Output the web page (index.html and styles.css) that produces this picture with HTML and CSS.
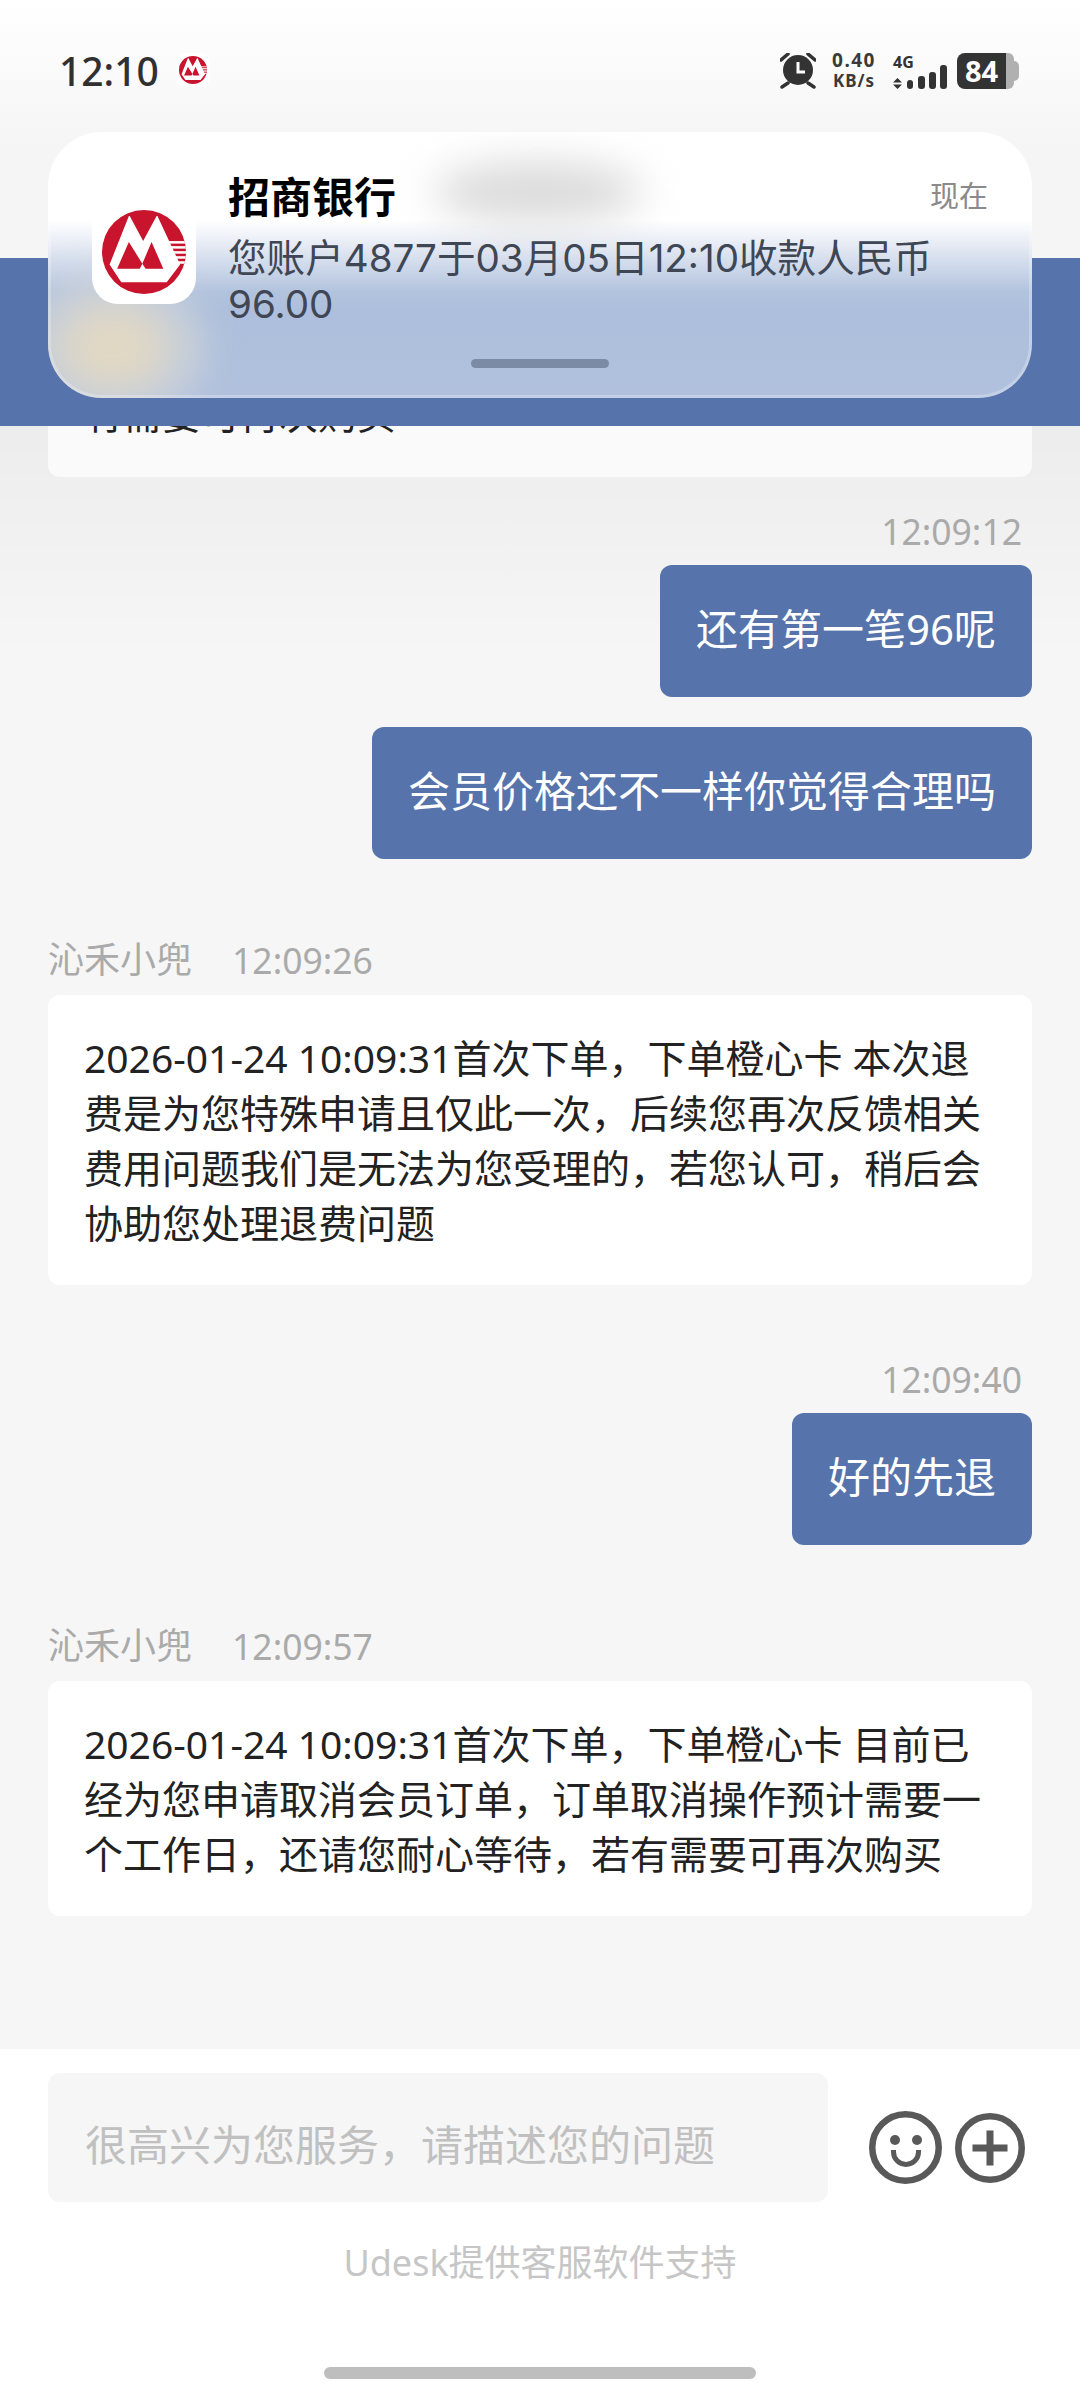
FILE: index.html
```html
<!DOCTYPE html>
<html>
<head>
    <meta charset="UTF-8">
    <title>在线客服</title>
    <link rel="stylesheet" href="styles.css">
</head>
<body>
<div class="phone">
    <header class="top">
        <div class="status">
            <div class="status-left">
                <span class="clock">12:10</span>
                <span class="mini-logo">
                    <svg width="28" height="28" viewBox="0 0 100 100"><use href="#cmb"/></svg>
                </span>
            </div>
            <div class="status-right">
                <svg class="alarm" width="36" height="36" viewBox="0 0 36 36">
                    <circle cx="18" cy="17" r="15" fill="#333"/>
                    <path d="M18 9v10h7" fill="none" stroke="#fff" stroke-width="3"/>
                    <path d="M1 7l7-6M35 7l-7-6M2 34l6-4M34 34l-6-4" fill="none" stroke="#333" stroke-width="3.500" stroke-linecap="round"/>
                </svg>
                <div class="speed"><span>0.40</span><span class="unit">KB/s</span></div>
                <div class="signal">
                    <span class="net">4G</span>
                    <svg width="54" height="24" viewBox="0 0 54 24">
                        <path d="M4.500 13l4.500 4.500h-9zM4.500 24l4.500-4.500h-9z" fill="#333"/>
                        <rect x="14" y="15" width="6" height="9" rx="3" fill="#333"/>
                        <rect x="25" y="11" width="7" height="13" rx="3" fill="#333"/>
                        <rect x="36" y="7" width="7" height="17" rx="3" fill="#333"/>
                        <rect x="47" y="0" width="7" height="24" rx="3" fill="#333"/>
                    </svg>
                </div>
                <div class="battery"><span class="level">84</span><span class="rest"></span></div>
            </div>
        </div>
        <div class="blue-bar"></div>
    </header>

    <section class="notice">
        <span class="blob blob-grey"></span>
        <span class="blob blob-orange"></span>
        <div class="notice-body">
            <div class="app-icon">
                <svg width="84" height="84" viewBox="0 0 100 100"><use href="#cmb"/></svg>
            </div>
            <div class="notice-text">
                <div class="notice-head">
                    <span class="notice-title">招商银行</span>
                    <span class="notice-time">现在</span>
                </div>
                <p class="notice-msg">您账户4877于03月05日12:10收款人民币<br>96.00</p>
            </div>
        </div>
        <span class="grip"></span>
    </section>

    <main class="chat">
        <div class="msg-card cut-card">
            <div class="cut-text">有需要可再次购买</div>
        </div>

        <div class="time-right first">12:09:12</div>
        <div class="bubble">还有第一笔96呢</div>
        <div class="bubble second">会员价格还不一样你觉得合理吗</div>

        <div class="agent"><span class="agent-name">沁禾小兜</span><span>12:09:26</span></div>
        <div class="msg-card">2026-01-24 10:09:31首次下单，下单橙心卡 本次退费是为您特殊申请且仅此一次，后续您再次反馈相关费用问题我们是无法为您受理的，若您认可，稍后会协助您处理退费问题</div>

        <div class="time-right">12:09:40</div>
        <div class="bubble">好的先退</div>

        <div class="agent"><span class="agent-name">沁禾小兜</span><span>12:09:57</span></div>
        <div class="msg-card">2026-01-24 10:09:31首次下单，下单橙心卡 目前已经为您申请取消会员订单，订单取消操作预计需要一个工作日，还请您耐心等待，若有需要可再次购买</div>
    </main>

    <footer class="footer">
        <div class="input-row">
            <div class="input-box">很高兴为您服务，请描述您的问题</div>
            <svg class="tool smile" width="73" height="73" viewBox="0 0 73 73">
                <circle cx="36.500" cy="36.500" r="33.250" fill="none" stroke="#595959" stroke-width="6.500"/>
                <circle cx="26" cy="29" r="5" fill="#595959"/>
                <circle cx="48" cy="29" r="5" fill="#595959"/>
                <path d="M24.500 39v2a12.500 12.500 0 0 0 25 0v-2" fill="none" stroke="#595959" stroke-width="5"/>
            </svg>
            <svg class="tool plus" width="70" height="70" viewBox="0 0 70 70">
                <circle cx="35" cy="35" r="31.750" fill="none" stroke="#595959" stroke-width="6.500"/>
                <path d="M35 17.500v35M17.500 35h35" fill="none" stroke="#595959" stroke-width="7"/>
            </svg>
        </div>
        <div class="support">Udesk提供客服软件支持</div>
        <div class="home-bar"></div>
    </footer>
</div>

<!-- 招行图标 -->
<svg width="0" height="0" class="defs">
    <defs>
        <clipPath id="cmb-clip"><circle cx="50" cy="50" r="50"/></clipPath>
        <symbol id="cmb" viewBox="0 0 100 100">
            <circle cx="50" cy="50" r="50" fill="#c8152d"/>
            <path d="M33 7h-1L9 65l14 21h54l16-21L66 7h-1L49 37z" fill="#fff"/>
            <path d="M32 38L18 70h27l3-6zM59 38L48 64l4 6h21z" fill="#c8152d"/>
            <g clip-path="url(#cmb-clip)" fill="#fff">
                <rect x="78" y="37" width="24" height="3"/>
                <rect x="78" y="43" width="24" height="3"/>
                <rect x="78" y="49" width="24" height="3"/>
                <rect x="78" y="55" width="24" height="3"/>
                <rect x="78" y="61" width="24" height="3"/>
            </g>
        </symbol>
    </defs>
</svg>
</body>
</html>
```

FILE: styles.css
```css
* {
    box-sizing: border-box;
}

html,
body {
    margin: 0;
    padding: 0;
}

body {
    font-family: "Noto Sans", "Noto Sans CJK SC", sans-serif;
    background-color: #f6f6f6;
}

.phone {
    position: relative;
    width: 1080px;
    height: 2400px;
    overflow: hidden;
    display: flex;
    flex-direction: column;
    background-color: #f6f6f6;
}

.defs {
    position: absolute;
}

/* 顶部 */
.top {
    position: relative;
    z-index: 2;
    height: 426px;
    flex: none;
    display: flex;
    flex-direction: column;
    background: linear-gradient(#ffffff, #f5f5f5 150px);
}

.status {
    height: 258px;
    padding: 46px 60px 0 59px;
    display: flex;
    justify-content: space-between;
    align-items: flex-start;
}

.status-left {
    display: flex;
    align-items: center;
    gap: 17px;
    height: 48px;
}

.clock {
    font-size: 39px;
    font-weight: 500;
    color: #303030;
}

.mini-logo {
    width: 34px;
    height: 34px;
    display: flex;
    align-items: center;
    justify-content: center;
    background-color: #fff;
    border-radius: 8px;
}

.status-right {
    display: flex;
    align-items: center;
    height: 50px;
}

.alarm {
    margin-right: 15px;
}

.speed {
    width: 46px;
    margin-right: 16px;
    display: flex;
    flex-direction: column;
    align-items: center;
    font-weight: 700;
    font-size: 19px;
    line-height: 20px;
    letter-spacing: 1.500px;
    white-space: nowrap;
    color: #3a3a3a;
}

.speed .unit {
    font-size: 17px;
    line-height: 22px;
    letter-spacing: 1px;
}

.signal {
    position: relative;
    width: 54px;
    height: 36px;
    margin-right: 10px;
    display: flex;
    align-items: flex-end;
}

.signal .net {
    position: absolute;
    left: 0;
    top: 0;
    font-weight: 700;
    font-size: 16px;
    line-height: 18px;
    color: #333;
}

.battery {
    position: relative;
    display: flex;
    width: 63px;
    height: 36px;
}

.battery .level {
    width: 49px;
    background-color: #333;
    color: #fff;
    font-weight: 700;
    font-size: 29px;
    line-height: 36px;
    text-align: center;
    border-radius: 8px 0 0 8px;
}

.battery .rest {
    position: relative;
    width: 8px;
    background-color: #b0b0b0;
    border-radius: 0 6px 6px 0;
}

.battery .rest::after {
    content: "";
    position: absolute;
    left: 8px;
    top: 8px;
    width: 5px;
    height: 20px;
    background-color: #b0b0b0;
    border-radius: 0 5px 5px 0;
}

.blue-bar {
    height: 168px;
    background-color: #5673ab;
}

/* 通知 */
.notice {
    position: absolute;
    z-index: 3;
    left: 48px;
    top: 132px;
    width: 984px;
    height: 266px;
    overflow: hidden;
    border-radius: 54px;
    background: linear-gradient(#ffffff 0, #ffffff 88px, #e4e9f3 115px, #c8d4e8 140px, #b2c3de 160px, #adbfdc 180px, #b1c1dd 100%);
}

.notice::after {
    content: "";
    position: absolute;
    inset: 0;
    border-radius: 54px;
    box-shadow: inset 0 0 0 3px rgba(255, 255, 255, 0.25);
}

.blob {
    position: absolute;
    border-radius: 50%;
}

.blob-grey {
    left: 385px;
    top: 30px;
    width: 210px;
    height: 60px;
    filter: blur(20px);
    background-color: #dadada;
}

.blob-orange {
    left: -60px;
    top: 115px;
    width: 250px;
    height: 200px;
    filter: blur(12px);
    background: radial-gradient(closest-side, #e5d9c0 0, #dcd6c8 30%, rgba(214, 216, 216, 0.6) 60%, rgba(205, 214, 226, 0) 90%);
}

.notice-body {
    position: relative;
    display: flex;
    padding: 40px 44px 0 44px;
}

.app-icon {
    width: 104px;
    height: 104px;
    margin-top: 28px;
    flex: none;
    display: flex;
    align-items: center;
    justify-content: center;
    background-color: #fff;
    border-radius: 26px;
}

.notice-text {
    margin-left: 32px;
    flex: 1;
}

.notice-head {
    display: flex;
    justify-content: space-between;
    align-items: center;
    height: 44px;
}

.notice-title {
    font-size: 42px;
    font-weight: 700;
    color: #000;
}

.notice-time {
    font-size: 29px;
    color: #8a8a8a;
}

.notice-msg {
    margin: 19px 0 0;
    font-family: Inter, "Noto Sans CJK SC", sans-serif;
    font-size: 38.600px;
    line-height: 46px;
    color: #3f4654;
}

.grip {
    position: absolute;
    left: 423px;
    top: 227px;
    width: 138px;
    height: 9px;
    border-radius: 5px;
    background-color: #7c8ba5;
}

/* 聊天内容 */
.chat {
    position: relative;
    flex: 1;
    padding: 0 48px;
    display: flex;
    flex-direction: column;
    overflow: hidden;
}

/* 通知下方的阴影 */
.chat::before {
    content: "";
    position: absolute;
    left: 0;
    right: 0;
    top: 0;
    height: 230px;
    background: linear-gradient(rgba(0, 0, 0, 0.04), rgba(0, 0, 0, 0));
}

.msg-card {
    position: relative;
    background-color: #fff;
    border-radius: 12px;
    padding: 35px 36px;
    font-size: 39px;
    line-height: 55px;
    color: #222;
}

.cut-card {
    margin-top: -52px;
    height: 103px;
    padding: 12px 36px 0;
    background-color: #fafafa;
}

.time-right {
    margin-top: 67px;
    padding-right: 10px;
    text-align: right;
    font-size: 35.500px;
    line-height: 54px;
    color: #aaa;
}

.time-right.first {
    position: relative;
    margin-top: 27px;
}

.bubble {
    position: relative;
    align-self: flex-end;
    height: 132px;
    margin-top: 7px;
    padding: 0 36px;
    line-height: 128px;
    font-size: 42px;
    color: #fff;
    background-color: #5673ab;
    border-radius: 12px;
}

.bubble.second {
    margin-top: 30px;
}

.agent {
    margin: 74px 0 8px;
    height: 54px;
    display: flex;
    gap: 40px;
    font-size: 35.500px;
    line-height: 54px;
    color: #aaa;
}

.agent-name {
    font-size: 36px;
}

/* 底部输入 */
.footer {
    height: 351px;
    flex: none;
    padding: 24px 0 0 48px;
    background-color: #fff;
    display: flex;
    flex-direction: column;
}

.input-row {
    display: flex;
    align-items: center;
}

.input-box {
    width: 780px;
    height: 129px;
    padding: 0 37px;
    line-height: 143px;
    font-size: 42px;
    color: #c0c0c0;
    background-color: #f6f6f6;
    border-radius: 12px;
}

.tool {
    margin-top: 20px;
}

.smile {
    margin-left: 41px;
}

.plus {
    margin-left: 13px;
}

.support {
    margin: 35px 0 0 -48px;
    text-align: center;
    font-size: 36px;
    line-height: 52px;
    color: #c6c6c6;
}

.home-bar {
    width: 432px;
    height: 12px;
    margin: 78px 0 0 276px;
    border-radius: 6px;
    background-color: #bebebe;
}
```
